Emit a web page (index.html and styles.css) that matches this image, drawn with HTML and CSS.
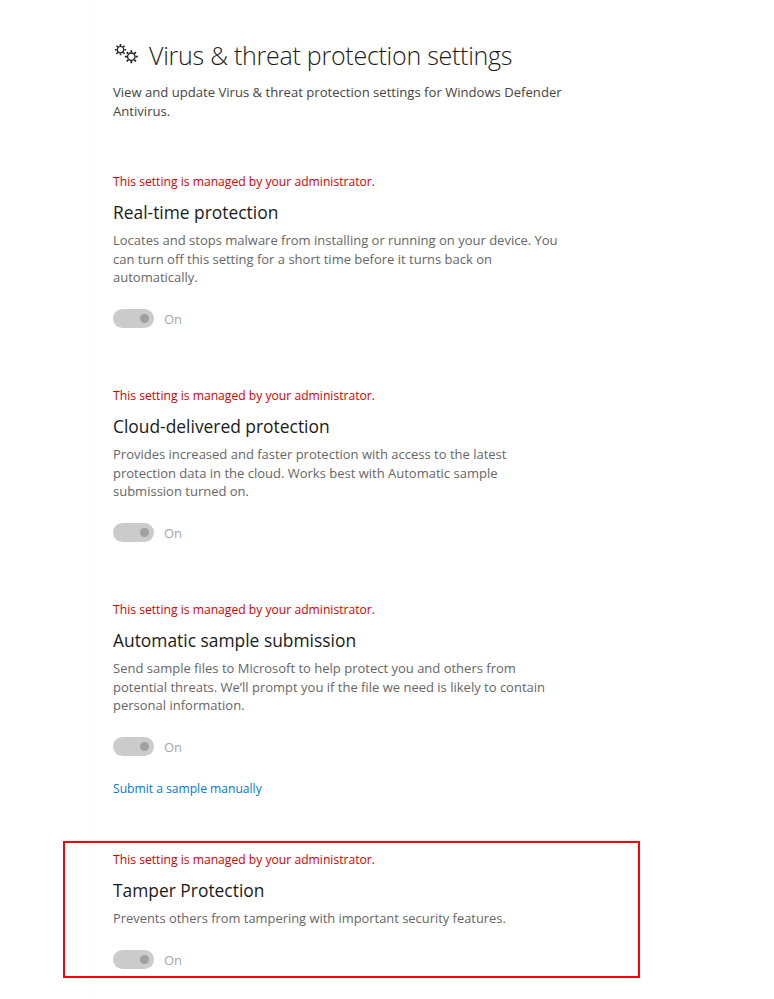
FILE: index.html
```html
<!DOCTYPE html>
<html lang="en">
<head>
<meta charset="utf-8">
<title>Virus &amp; threat protection settings</title>
<link rel="stylesheet" href="styles.css">
</head>
<body>
<main class="page">
  <header class="head">
    <svg class="gears" viewBox="0 0 25 22" width="25" height="22" aria-hidden="true">
      <g fill="none" stroke="#222">
        <g transform="translate(7.5 7.7)">
          <circle r="3.200" stroke-width="1.200"/>
          <path stroke-width="1.600" d="M0-5.600v1.900M0 3.700v1.900M-5.600 0h1.900M3.700 0h1.900M-4-4l1.300 1.300M2.700 2.700L4 4M-4 4l1.300-1.300M2.700-2.700L4-4"/>
        </g>
        <g transform="translate(18.300 14.700)">
          <circle r="3.700" stroke-width="1.300"/>
          <path stroke-width="1.800" d="M0-6.500v2.200M0 4.300v2.200M-6.500 0h2.200M4.300 0h2.200M-4.600-4.600l1.500 1.500M3.100 3.100l1.500 1.500M-4.600 4.600l1.500-1.500M3.100-3.100l1.500-1.500"/>
        </g>
      </g>
    </svg>
    <h1 class="title">Virus &amp; threat protection settings</h1>
  </header>
  <p class="intro">View and update Virus &amp; threat protection settings for Windows Defender Antivirus.</p>

  <section class="setting first">
    <p class="managed">This setting is managed by your administrator.</p>
    <h2 class="name">Real-time protection</h2>
    <p class="desc">Locates and stops malware from installing or running on your device. You can turn off this setting for a short time before it turns back on automatically.</p>
    <div class="toggle-row"><span class="toggle"><span class="knob"></span></span><span class="state">On</span></div>
  </section>

  <section class="setting">
    <p class="managed">This setting is managed by your administrator.</p>
    <h2 class="name">Cloud-delivered protection</h2>
    <p class="desc">Provides increased and faster protection with access to the latest protection data in the cloud. Works best with Automatic sample submission turned on.</p>
    <div class="toggle-row"><span class="toggle"><span class="knob"></span></span><span class="state">On</span></div>
  </section>

  <section class="setting">
    <p class="managed">This setting is managed by your administrator.</p>
    <h2 class="name">Automatic sample submission</h2>
    <p class="desc">Send sample files to Microsoft to help protect you and others from potential threats. We’ll prompt you if the file we need is likely to contain personal information.</p>
    <div class="toggle-row"><span class="toggle"><span class="knob"></span></span><span class="state">On</span></div>
    <a class="link" href="#">Submit a sample manually</a>
  </section>

  <section class="setting last">
    <div class="highlight"></div>
    <p class="managed">This setting is managed by your administrator.</p>
    <h2 class="name">Tamper Protection</h2>
    <p class="desc">Prevents others from tampering with important security features.</p>
    <div class="toggle-row"><span class="toggle"><span class="knob"></span></span><span class="state">On</span></div>
  </section>
</main>
</body>
</html>
```
FILE: styles.css
```css
html, body { margin: 0; padding: 0; background: #fff; }
body { height: 999px; overflow: hidden; font-family: "Open Sans", "Noto Sans", sans-serif; }
p, h1, h2 { margin: 0; font-weight: 400; }
.page { box-sizing: border-box; width: 681px; height: 999px; padding: 0 0 0 19px; margin-left: 93px; border-left: 1px solid #fafafa; }
.head { display: flex; align-items: center; gap: 11px; padding-top: 37px; height: 36px; }
.gears { flex: none; margin-top: -4px; }
.title { font-size: 25px; line-height: 36px; color: #1a1a1a; letter-spacing: -0.26px; font-weight: 300; white-space: nowrap; }
.intro { width: 452px; margin-top: 10px; font-size: 13.1px; line-height: 18.5px; color: #444; }
.setting { width: 450px; position: relative; margin-top: 59.5px; }
.setting.first { margin-top: 53px; }
.setting.last { margin-top: 53.5px; }
.managed { font-size: 12.15px; line-height: 18px; color: #d40000; white-space: nowrap; }
.name { margin-top: 9px; font-size: 17.4px; line-height: 24px; color: #1a1a1a; }
.desc { margin-top: 7px; font-size: 13px; line-height: 18.5px; color: #666; }
.last .desc { font-size: 12.9px; }
.toggle-row { display: flex; align-items: center; gap: 11px; margin-top: 23px; height: 18px; }
.toggle { box-sizing: border-box; display: flex; align-items: center; justify-content: flex-end; width: 41px; height: 19px; padding-right: 5px; border-radius: 10px; background: #cbcbcb; }
.knob { width: 9px; height: 9px; border-radius: 50%; background: #a0a0a0; }
.state { font-size: 13px; color: #a6a6a6; margin-left: -1px; }
.link { display: block; margin-top: 24px; font-size: 12.1px; line-height: 18px; color: #0078d7; text-decoration: none; }
.highlight { position: absolute; left: -50px; top: -10px; width: 573px; height: 133px; border: 2px solid #f00; }
```
